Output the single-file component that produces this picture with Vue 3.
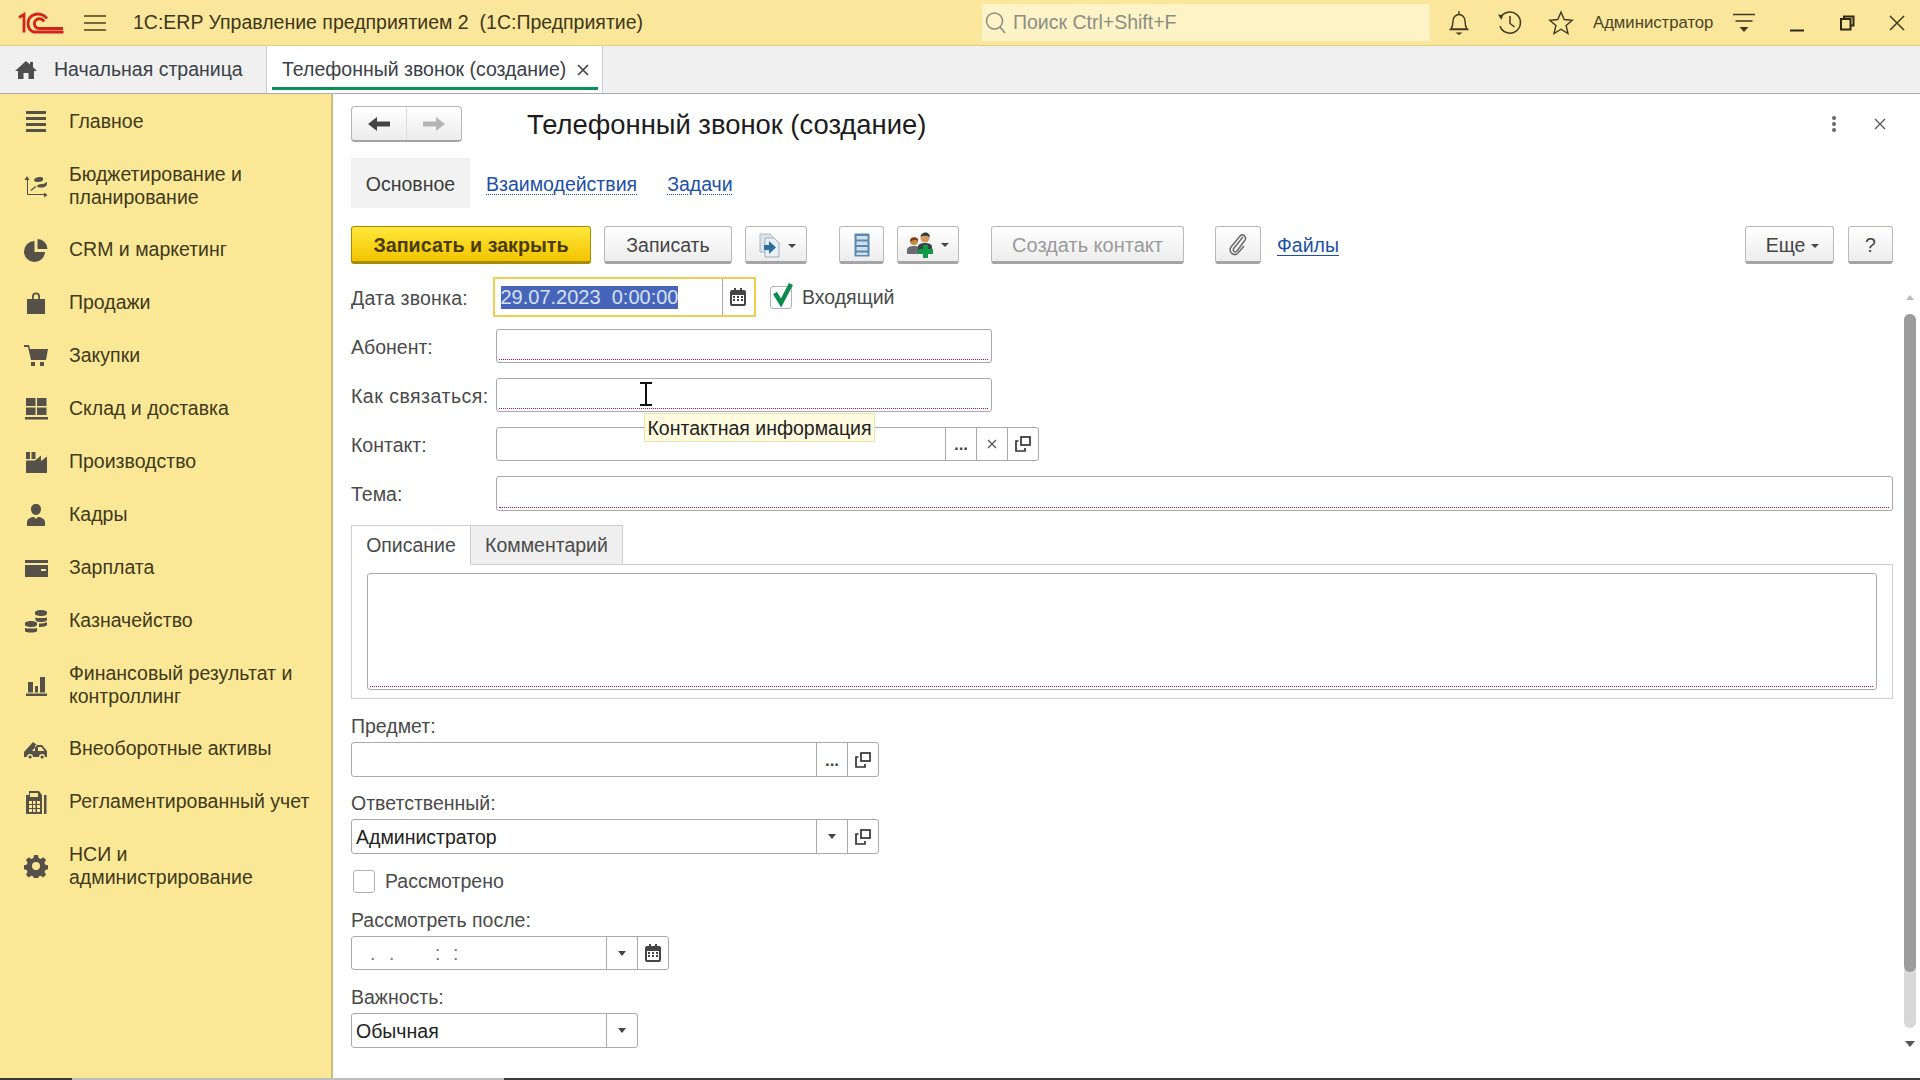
<script setup>
const appTitle = '1С:ERP Управление предприятием 2  (1С:Предприятие)'
const dateText = '29.07.2023  0:00:00'
const navItems = [
  { lines: ['Главное'], d: 'M2 1h20v3H2zM2 7h20v3H2zM2 13h20v3H2zM2 19h20v3H2z' },
  { lines: ['Бюджетирование и', 'планирование'], d: 'M3 2l2.500 4H4v14h16v-1.500l3.500 2.500-3.500 2.500V21H3V6H.5zM6.500 16l5-4 .8 1-5 4zM10 6c0-1.500 3-3 6-3 2 0 3 .5 3 1.500v1.500c0 1-3 2-5 2s-4-.5-4-2zM13 12c0-1 2-2 5-2s4-2 5-2v2c0 1.500-2 3.500-5 3.500s-5-.5-5-1.500z' },
  { lines: ['CRM и маркетинг'], d: 'M10.500 3a10.500 10.500 0 1 0 10.500 11H10.500zM13.500 1v10H23.500A10 10 0 0 0 13.500 1z' },
  { lines: ['Продажи'], d: 'M3 8h5V5.500a4 4 0 0 1 8 0V8h5v15H3zM9.800 8h4.400V5.500a2.200 2.200 0 0 0-4.400 0z' },
  { lines: ['Закупки'], d: 'M0 1h5l1 4h18l-2 11H7L4 3H0zM7 18h4v4H7zM16 18h4v4h-4z' },
  { lines: ['Склад и доставка'], d: 'M2 1h9.500v8H2zM13 1h9.500v8H13zM2 10.500h9.500V18H2zM13 10.500h9.500V18H13zM1 20h23v2.500H1z' },
  { lines: ['Производство'], d: 'M2 2h4v7H2zM7.500 2h4v7h-4zM2 10.500h9l6-5v5.500l6-4.500V23H2z' },
  { lines: ['Кадры'], d: 'M12 1c3 0 5 2 5 5s-2 6-5 6-5-3-5-6 2-5 5-5zM3 23v-4c0-3 4-5 7-5l2 2 2-2c3 0 7 2 7 5v4z' },
  { lines: ['Зарплата'], d: 'M1 4h23v3H1zM1 9h23v12H1zM17 13v2h5v-2z' },
  { lines: ['Казначейство'], d: 'M11 3c0-1 3-2 6-2s6 1 6 2v2c0 1-3 2-6 2s-6-1-6-2zM11 8.500c2 .7 10 .7 12 0V11c0 1-3 2-6 2-2 0-4-.4-5-1zM1 14c0-1 3-2 6-2s6 1 6 2v2c0 1-3 2-6 2s-6-1-6-2zM1 19c2 .7 10 .7 12 0v3c0 1-3 1.500-6 1.500s-6-.5-6-1.500zM15 14.500c3 0 6-.5 8-1.500v3c0 1-4 2-8 2z' },
  { lines: ['Финансовый результат и', 'контроллинг'], d: 'M2 20.500h21V23H2zM4 9h5v10.500H4zM11 13h3v6.500h-3zM16 4h5v15.500h-5z' },
  { lines: ['Внеоборотные активы'], d: 'M0 15l9-10 4 3-5 6h3V8h7l5 6v6h-2a3 3 0 0 0-6 0H9a3 3 0 0 0-6 0H0zM14 10v4h6.500l-3-4zM4.500 20a1.600 1.600 0 1 1 3.200 0 1.600 1.600 0 1 1-3.200 0zM16.500 20a1.600 1.600 0 1 1 3.200 0 1.600 1.600 0 1 1-3.200 0z' },
  { lines: ['Регламентированный учет'], d: 'M5 1h10l3 4v19H2V5h3zM6 3v4h8V3zM5 11v3h3v-3zM9 11v3h2.500v-3zM13 11v3h3v-3zM5 15v3h3v-3zM9 15v3h2.500v-3zM13 15v3h3v-3zM5 19v3h3v-3zM9 19v3h2.500v-3zM13 19v3h3v-3zM20 5h2.500v19H20z' },
  { lines: ['НСИ и', 'администрирование'], d: 'M10 1h4l.6 3 2.200.9 2.500-1.700 2.800 2.800-1.700 2.500.9 2.200 3 .6v4l-3 .6-.9 2.200 1.700 2.500-2.800 2.800-2.500-1.700-2.200.9-.6 3h-4l-.6-3-2.200-.9-2.500 1.700-2.800-2.800 1.700-2.500-.9-2.200-3-.6v-4l3-.6.9-2.200-1.700-2.500 2.800-2.800 2.500 1.700 2.200-.9zM12 8a4 4 0 1 0 0 8 4 4 0 0 0 0-8z' }
]
</script>

<template>
  <div class="app">
    <header class="topbar">
      <svg class="logo" width="46" height="22" viewBox="0 0 46 22" fill="none" stroke="#d2231c" stroke-width="2.800">
        <path d="M1 5.500L6 2.500V20.500" />
        <path d="M29 6.500C26 2 20 1 15.500 3 8.500 6 8 17 15.500 20H45.500" />
        <path d="M26 9.500C24 6 19.500 6 17.500 8.500 15 12 17 16.500 21.500 16.500H45" />
      </svg>
      <svg class="burger" width="22" height="20" viewBox="0 0 22 20" stroke="#4a3f1c" stroke-width="1.400">
        <path d="M0 3h22M0 10h22M0 17h22" />
      </svg>
      <span class="apptitle">{{ appTitle }}</span>
      <div class="search">
        <svg width="24" height="24" viewBox="0 0 24 24" fill="none" stroke="#8a8a80" stroke-width="1.500">
          <circle cx="10.500" cy="10" r="8" /><path d="M16 16l5 6" />
        </svg>
        <span>Поиск Ctrl+Shift+F</span>
      </div>
      <svg class="ti bell" width="24" height="26" viewBox="0 0 24 26" fill="none" stroke="#3f3820" stroke-width="1.400">
        <path d="M12 1v3M4 19c2-3 2-5 2-8 0-4 3-6.500 6-6.500s6 2.500 6 6.500c0 3 0 5 2 8zM2.500 19.500h19" /><path d="M8.500 22.500h7l-3.500 2.500z" fill="#3f3820" stroke="none" />
      </svg>
      <svg class="ti clock" width="26" height="26" viewBox="0 0 26 26" fill="none" stroke="#3f3820" stroke-width="1.500">
        <path d="M3.500 8A10.500 10.500 0 1 1 3 16" /><path d="M13 6v7.500l4.500 3.500" /><path d="M1 4.500l5 .5-1.500 5z" fill="#3f3820" stroke="none" />
      </svg>
      <svg class="ti star" width="26" height="26" viewBox="0 0 26 26" fill="none" stroke="#3f3820" stroke-width="1.400">
        <path d="M13 2l3.200 7.500 8 .7-6.100 5.300 1.900 8L13 19.200 6 23.500l1.900-8L1.800 10.200l8-.7z" />
      </svg>
      <span class="user">Администратор</span>
      <svg class="ti umenu" width="24" height="22" viewBox="0 0 24 22" fill="none" stroke="#3f3820" stroke-width="1.400">
        <path d="M1 2.500h22M3.500 9h17" /><path d="M7.500 15h9L12 20z" fill="#3f3820" stroke="none" />
      </svg>
      <svg class="ti wmin" width="16" height="22" viewBox="0 0 16 22"><path d="M1 18.500h14" stroke="#2f2810" stroke-width="2" /></svg>
      <svg class="ti wmax" width="16" height="16" viewBox="0 0 16 16" fill="none" stroke="#2f2810" stroke-width="2"><path d="M5 3.500V1.500h9.500v9H12" /><rect x="2" y="4" width="9.500" height="10.500" /></svg>
      <svg class="ti wclose" width="16" height="16" viewBox="0 0 16 16" stroke="#3f3820" stroke-width="1.500"><path d="M1 1l14 14M15 1L1 15" /></svg>
    </header>

    <nav class="tabbar">
      <div class="hometab">
        <svg width="22" height="18" viewBox="0 0 22 18" fill="#4d4d4d"><path d="M11 0l4 3.600V1h3v5.300L22 10h-3v8h-5.500v-6h-5v6H3v-8H0z" /></svg>
        <span>Начальная страница</span>
      </div>
      <div class="doctab">
        <span>Телефонный звонок (создание)</span>
        <svg width="12" height="12" viewBox="0 0 12 12" stroke="#444" stroke-width="1.700"><path d="M1 1l10 10M11 1L1 11" /></svg>
        <i class="green"></i>
      </div>
    </nav>

    <div class="body">
      <aside class="side">
        <div v-for="item in navItems" :key="item.lines[0]" class="nitem">
          <svg width="24" height="24" viewBox="0 0 24 24" fill="#555148" fill-rule="evenodd"><path :d="item.d" /></svg>
          <div class="ntext"><div v-for="l in item.lines" :key="l">{{ l }}</div></div>
        </div>
      </aside>

      <main class="main">
        <div class="content">
          <div class="head">
            <div class="navbtns">
              <div class="nb">
                <svg width="24" height="16" viewBox="0 0 24 16" fill="#444"><path d="M1 8l9-7v4.500h13v5H10V15z" /></svg>
              </div>
              <div class="nb">
                <svg width="24" height="16" viewBox="0 0 24 16" fill="#b5b5b5"><path d="M23 8l-9-7v4.500H1v5h13V15z" /></svg>
              </div>
            </div>
            <h1 class="title">Телефонный звонок (создание)</h1>
            <svg class="kebab" width="6" height="18" viewBox="0 0 6 18" fill="#666"><circle cx="3" cy="3" r="2" /><circle cx="3" cy="9" r="2" /><circle cx="3" cy="15" r="2" /></svg>
            <svg class="fclose" width="12" height="12" viewBox="0 0 12 12" stroke="#555" stroke-width="1.300"><path d="M1 1l10 10M11 1L1 11" /></svg>
          </div>

          <div class="pages">
            <span class="page on">Основное</span>
            <a class="page link p2">Взаимодействия</a>
            <a class="page link p3">Задачи</a>
          </div>

          <div class="toolbar">
            <button class="btn primary">Записать и закрыть</button>
            <button class="btn b-save">Записать</button>
            <button class="btn b-split">
              <svg width="26" height="26" viewBox="0 0 26 26"><path d="M3 1h10l3 3v15H3z" fill="#dde3ea" stroke="#aab8c6" /><path d="M8 5h9l5 5v14H8z" fill="#e8eff5" stroke="#9db0c2" /><path d="M7 12h5V8l7 6.500-7 6.500v-4H7z" fill="#2f6f9f" /></svg>
              <i class="caret"></i>
            </button>
            <button class="btn b-list">
              <svg width="16" height="24" viewBox="0 0 16 24"><rect x=".5" y=".5" width="15" height="23" rx="1" fill="#5d87ad" /><path d="M2.500 3h11v3.500h-11zM2.500 8.500h11V12h-11zM2.500 14h11v3.500h-11zM2.500 19.500h11V22h-11z" fill="#cfe0ee" /></svg>
            </button>
            <button class="btn b-contact">
              <svg width="28" height="26" viewBox="0 0 28 26"><circle cx="7" cy="9" r="4" fill="#c8873f" /><path d="M6 6c-3 0-3 3-2 4 1-2 3-2 5-2 1 1 2 1 2 0 0-2-3-3-5-2z" fill="#7a3f1e" /><path d="M0 22v-4c0-3 3-4 7-4s7 1 7 4v4z" fill="#6b6b72" /><circle cx="18" cy="6" r="4.500" fill="#d69a60" /><path d="M13.500 5c0-3 3-4.500 5-4.500s4.500 1.500 4.500 4.500c-2-1-7-2-9.500 0z" fill="#33383d" /><path d="M11 20v-5c0-3 3-4 7-4s7 1 7 4v5z" fill="#3b4350" /><path d="M16 13h5v4h5v5h-5v4h-5v-4h-4.500v-5H16z" fill="#0f9b46" /></svg>
              <i class="caret"></i>
            </button>
            <button class="btn b-create">Создать контакт</button>
            <button class="btn b-clip">
              <svg width="20" height="24" viewBox="0 0 20 24" fill="none" stroke="#6a6a6a" stroke-width="1.500"><path d="M15 4L6 15c-2 3 1 5 3 3l8-11c2-3-2-7-5-4L3 14c-3 5 3 10 7 6l6-7" /></svg>
            </button>
            <a class="link files">Файлы</a>
            <button class="btn b-more">Еще <i class="caret"></i></button>
            <button class="btn b-help">?</button>
          </div>

          <div class="row r-date">
            <label class="lab wide1">Дата звонка:</label>
            <div class="datebox">
              <span class="sel">{{ dateText }}</span>
              <span class="dbtn">
                <svg width="16" height="18" viewBox="0 0 16 18" fill="#444" fill-rule="evenodd"><path d="M2 2h2V0h2v2h4V0h2v2h2a2 2 0 0 1 2 2v12a2 2 0 0 1-2 2H2a2 2 0 0 1-2-2V4a2 2 0 0 1 2-2zM2 7v9h12V7zM3 8h2v2H3zM7 8h2v2H7zM11 8h2v2h-2zM3 11h2v2H3zM7 11h2v2H7zM11 11h2v2h-2z" /></svg>
              </span>
            </div>
            <div class="check on">
              <svg width="26" height="28" viewBox="0 0 26 28" fill="none" stroke="#0b8a4c" stroke-width="4.500"><path d="M5 12l6 10L21 3" /></svg>
            </div>
            <span class="chklabel">Входящий</span>
          </div>

          <div class="row r1">
            <label class="lab">Абонент:</label>
            <div class="field req w-495"></div>
          </div>
          <div class="row r2">
            <label class="lab wide2">Как связаться:</label>
            <div class="field req w-495">
              <svg class="ibeam" width="14" height="24" viewBox="0 0 14 24" fill="none" stroke="#111" stroke-width="2"><path d="M1 1h12M7 1v22M1 23h12" /></svg>
              <div class="tip">Контактная информация</div>
            </div>
          </div>
          <div class="row r2">
            <label class="lab">Контакт:</label>
            <div class="field w-542">
              <span class="grow"></span>
              <span class="fb dots">...</span>
              <span class="fb"><svg width="10" height="10" viewBox="0 0 10 10" stroke="#555" stroke-width="1.300"><path d="M1 1l8 8M9 1L1 9" /></svg></span>
              <span class="fb">
                <svg width="16" height="16" viewBox="0 0 16 16" fill="none" stroke="#333" stroke-width="1.700"><rect x="6" y="1" width="9" height="8" /><path d="M3.500 5H1v10h9v-3" /></svg>
              </span>
            </div>
          </div>
          <div class="row r2">
            <label class="lab">Тема:</label>
            <div class="field req w-full h35"></div>
          </div>

          <div class="subtabs">
            <span class="st on">Описание</span>
            <span class="st">Комментарий</span>
          </div>
          <div class="panel">
            <div class="area req"></div>
          </div>

          <label class="toplab t1">Предмет:</label>
          <div class="field w-528 h35">
            <span class="grow"></span>
            <span class="fb dots">...</span>
            <span class="fb">
              <svg width="16" height="16" viewBox="0 0 16 16" fill="none" stroke="#333" stroke-width="1.700"><rect x="6" y="1" width="9" height="8" /><path d="M3.500 5H1v10h9v-3" /></svg>
            </span>
          </div>

          <label class="toplab t2">Ответственный:</label>
          <div class="field w-528 h35">
            <span class="val grow">Администратор</span>
            <span class="fb"><i class="tri"></i></span>
            <span class="fb">
              <svg width="16" height="16" viewBox="0 0 16 16" fill="none" stroke="#333" stroke-width="1.700"><rect x="6" y="1" width="9" height="8" /><path d="M3.500 5H1v10h9v-3" /></svg>
            </span>
          </div>

          <div class="chkrow">
            <div class="check"></div>
            <span class="chklabel">Рассмотрено</span>
          </div>

          <label class="toplab t3">Рассмотреть после:</label>
          <div class="field w-318">
            <span class="mask grow"><b class="m1">.</b><b class="m2">.</b><b class="m3">:</b><b>:</b></span>
            <span class="fb"><i class="tri"></i></span>
            <span class="fb">
              <svg width="16" height="18" viewBox="0 0 16 18" fill="#444" fill-rule="evenodd"><path d="M2 2h2V0h2v2h4V0h2v2h2a2 2 0 0 1 2 2v12a2 2 0 0 1-2 2H2a2 2 0 0 1-2-2V4a2 2 0 0 1 2-2zM2 7v9h12V7zM3 8h2v2H3zM7 8h2v2H7zM11 8h2v2h-2zM3 11h2v2H3zM7 11h2v2H7zM11 11h2v2h-2z" /></svg>
            </span>
          </div>

          <label class="toplab t3b">Важность:</label>
          <div class="field w-287 h35">
            <span class="val grow">Обычная</span>
            <span class="fb"><i class="tri"></i></span>
          </div>
        </div>

        <div class="scroll">
          <i class="up"></i>
          <div class="track"><div class="thumb"></div></div>
          <i class="down"></i>
        </div>
      </main>
    </div>

    <div class="strip"><i class="s1"></i><i class="s2"></i><i class="s3"></i></div>
  </div>
</template>

<style>
html, body { margin: 0; background: #fff; }
</style>

<style scoped>
* { box-sizing: border-box; }
.app {
  width: 1920px; height: 1080px; overflow: hidden; display: flex; flex-direction: column;
  font-family: "Liberation Sans", Arial, sans-serif; font-size: 19.500px; color: #4a4a4a; background: #fff;
}
/* top bar */
.topbar {
  height: 46px; flex: none; display: flex; align-items: center; position: relative;
  background: #fbe79b; border-bottom: 1px solid #e2cf7e; padding-left: 18px; color: #3d3618;
}
.burger { margin-left: 20px; }
.apptitle { margin-left: 27px; width: 849px; white-space: pre; font-size: 19.500px; flex: none; }
.search {
  width: 448px; height: 37px; background: #fdf3c6; display: flex; align-items: center; padding-left: 2px; color: #8d8d84; font-size: 19.500px; flex: none;
}
.search span { margin-left: 5px; }
.ti { flex: none; }
.bell { margin-left: 17px; }
.clock { margin-left: 26px; }
.star { margin-left: 25px; }
.user { margin-left: 19px; font-size: 16.700px; width: 120px; white-space: nowrap; color: #4a4326; flex: none; }
.umenu { margin-left: 19px; }
.wmin { margin-left: 33px; }
.wmax { margin-left: 34px; }
.wclose { margin-left: 34px; }
/* tabs */
.tabbar {
  height: 48px; flex: none; display: flex; background: #f0f0f0; border-bottom: 1px solid #a9a9a9; color: #3b4048;
}
.hometab { width: 266px; display: flex; align-items: center; padding-left: 15px; }
.hometab span { margin-left: 17px; }
.doctab {
  width: 337px; height: 47px; background: #fff; border-left: 1px solid #cfcfcf; border-right: 1px solid #cfcfcf;
  display: flex; align-items: center; padding-left: 15px; position: relative;
}
.doctab svg { margin-left: 11px; }
.green { position: absolute; left: 5px; right: 4px; top: 41px; height: 3px; background: #0c8f58; }
/* body */
.body { flex: 1; min-height: 0; display: flex; }
.side { width: 333px; flex: none; background: #fbe896; border-right: 2px solid #cabb80; padding-left: 24px; color: #40391a; }
.nitem { display: flex; align-items: center; padding: 15px 0; line-height: 23px; font-size: 19.500px; }
.nitem:nth-child(1) { padding: 16px 0 15px; }
.nitem:nth-child(2) { padding: 15px 0 14px; }
.nitem:nth-child(11) { padding: 15px 0 14px; }
.nitem svg { margin: -2px 0; flex: none; }
.ntext { margin-left: 21px; white-space: nowrap; }
.main { flex: 1; display: flex; min-width: 0; }
.content { width: 1566px; padding: 12px 0 0 18px; flex: none; }
.scroll { flex: 1; padding-top: 201px; display: flex; flex-direction: column; align-items: center; }
.up { width: 0; height: 0; border: 4px solid transparent; border-top: 0; border-bottom: 5px solid #bbb; }
.track { width: 12px; height: 714px; margin-top: 14px; background: #d8d8d8; border-radius: 6px; }
.thumb { height: 658px; background: #9c9c9c; border-radius: 6px; }
.down { margin-top: 13px; width: 0; height: 0; border: 5px solid transparent; border-bottom: 0; border-top: 6px solid #555; }

.head { height: 36px; display: flex; align-items: center; width: 1542px; }
.navbtns { width: 111px; height: 36px; display: flex; border: 1px solid #b5b5b5; border-bottom: 2px solid #a5a5a5; border-radius: 4px; background: linear-gradient(#fff, #ececec); }
.nb { flex: 1; display: flex; align-items: center; justify-content: center; }
.nb + .nb { border-left: 1px solid #ddd; }
.title { margin: 1px 0 0 65px; font-weight: 400; font-size: 27.400px; color: #1c1c1c; }
.kebab { margin-left: auto; margin-right: 37px; }
.fclose { margin-right: 7px; }

.pages { margin-top: 16px; height: 50px; display: flex; align-items: center; }
.page { line-height: 52px; height: 50px; }
.on.page { width: 119px; background: #f2f2f2; text-align: center; color: #3a3a3a; }
.link { color: #1c4fa8; text-decoration: underline dotted; text-underline-offset: 3px; text-decoration-thickness: 1px; }
.p2 { margin-left: 16px; }
.p3 { margin-left: 30px; }

.toolbar { margin-top: 18px; height: 38px; display: flex; align-items: stretch; width: 1542px; }
.btn {
  font: inherit; color: #444; padding: 3px 0 0; display: flex; align-items: center; justify-content: center;
  border: 1px solid #b9b9b9; border-bottom: 3px solid #a5a5a5; border-radius: 3px; background: linear-gradient(#fff, #ededed);
}
.primary { width: 240px; font-weight: 700; font-size: 19.700px; color: #4a3c00; background: linear-gradient(#ffe83c, #f3c400); border: 1px solid #a58c00; border-bottom: 3px solid #a58c00; }
.b-save { width: 128px; margin-left: 13px; }
.b-split { width: 62px; margin-left: 13px; }
.b-split .caret { margin-left: 5px; }
.b-list { width: 45px; margin-left: 32px; padding-top: 1px; }
.b-contact { width: 62px; margin-left: 13px; padding-top: 1px; }
.b-create { width: 193px; margin-left: 32px; color: #9a9a9a; font-size: 20px; }
.b-clip { width: 46px; margin-left: 31px; padding-top: 1px; }
.files { margin-left: 16px; align-self: center; color: #1c4fa8; text-decoration: underline; }
.b-more { width: 89px; margin-left: auto; padding-left: 6px; }
.b-help { width: 45px; margin-left: 14px; }
.caret { display: inline-block; width: 0; height: 0; margin-left: 6px; border: 4px solid transparent; border-bottom: 0; border-top: 4px solid #444; }

.row { display: flex; align-items: center; }
.lab { width: 145px; flex: none; white-space: nowrap; padding-top: 2px; }
.wide1 { letter-spacing: .2px; }
.wide2 { letter-spacing: .5px; }
.r-date { margin-top: 13px; height: 40px; }
.r-date .lab { width: 142px; }
.r1 { margin-top: 12px; }
.r2 { margin-top: 15px; }
.datebox { width: 263px; height: 40px; border: 2px solid #efcf4d; display: flex; align-items: center; justify-content: space-between; padding-left: 5.500px; flex: none; }
.sel { background: #4764bb; color: #d5e2f7; white-space: pre; line-height: 23px; font-size: 20px; }
.dbtn { width: 32px; height: 36px; border-left: 1px solid #aaa; display: flex; align-items: center; justify-content: center; padding-right: 2px; }
.check { width: 22px; height: 23px; border: 1px solid #b0b0b0; border-radius: 3px; position: relative; flex: none; }
.r-date .check { margin-left: 14px; }
.check svg { position: absolute; left: -1px; top: -6px; }
.chklabel { margin-left: 10px; padding-top: 1px; }

.field { height: 34px; border: 1px solid #aaa; border-radius: 3px; display: flex; position: relative; background: #fff; flex: none; }
.w-495 { width: 496px; }
.w-542 { width: 543px; }
.w-full { width: 1397px; }
.w-528 { width: 528px; }
.w-318 { width: 318px; }
.w-287 { width: 287px; }
.h35 { height: 35px; }
.grow { flex: 1; min-width: 0; }
.val { padding-left: 4px; line-height: 35px; color: #222; }
.fb { width: 31px; flex: none; border-left: 1px solid #aaa; display: flex; align-items: center; justify-content: center; color: #444; }
.dots { font-weight: 700; font-size: 17px; padding-top: 2px; }
.tri { width: 0; height: 0; border: 4px solid transparent; border-bottom: 0; border-top: 5px solid #444; }
.req::after { content: ""; position: absolute; left: 2px; right: 3px; bottom: 2px; border-bottom: 1px dotted #b8103c; }
.ibeam { position: absolute; left: 142px; top: 3px; }
.tip {
  position: absolute; left: 147px; top: 34px; width: 231px; height: 29px; z-index: 2; background: #fffbdf;
  border: 1px solid #ebe2ad; color: #222; line-height: 28px; text-align: center; white-space: nowrap; font-size: 19.500px;
}

.subtabs { margin-top: 14px; display: flex; height: 40px; position: relative; z-index: 1; }
.st { width: 152px; height: 40px; line-height: 38px; text-align: center; background: #efefef; border: 1px solid #cfcfcf; border-left: 0; }
.st.on { width: 120px; background: #fff; border-left: 1px solid #cfcfcf; border-bottom-color: #fff; }
.panel { margin-top: -1px; width: 1542px; height: 135px; border: 1px solid #cfcfcf; padding: 8px 15px 0; }
.area { height: 117px; border: 1px solid #aaa; border-radius: 3px; position: relative; }

.toplab { display: block; line-height: 23px; }
.t1 { margin-top: 16px; margin-bottom: 4px; }
.t2 { margin-top: 15px; margin-bottom: 4px; }
.t3 { margin-top: 17px; margin-bottom: 4px; }
.t3b { margin-top: 16px; margin-bottom: 4px; }
.chkrow { margin-top: 16px; padding-left: 2px; display: flex; align-items: center; height: 22px; }
.mask { padding-left: 18px; line-height: 33px; display: flex; color: #777; }
.mask b { font-weight: 400; display: block; }
.m1 { width: 19px; }
.m2 { width: 46px; }
.m3 { width: 18px; }

.strip { height: 2px; flex: none; display: flex; }
.strip i { display: block; }
.s1 { width: 72px; background: #3a3a3a; }
.s2 { width: 432px; background: #bdbdbd; }
.s3 { flex: 1; background: #3a3a3a; }
</style>
